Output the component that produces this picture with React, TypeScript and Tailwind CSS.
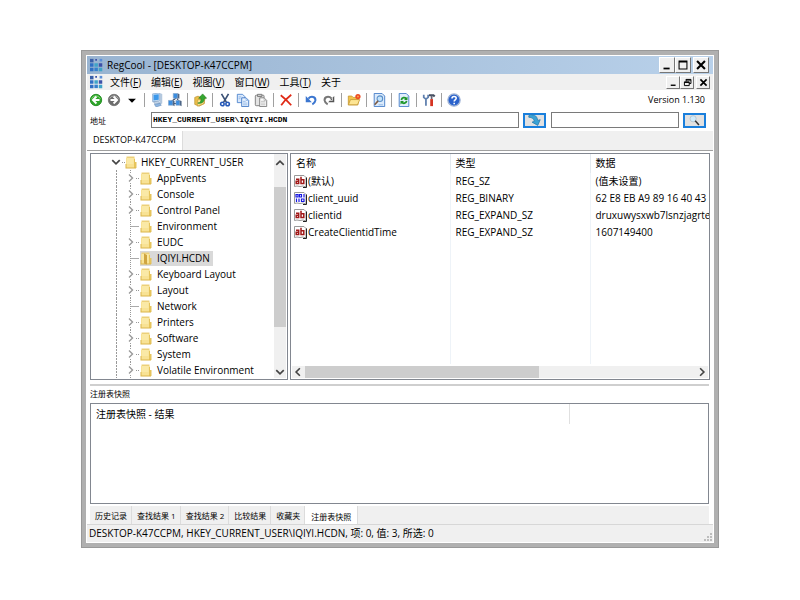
import type { ReactNode } from "react";
import clsx from "clsx";

type IconProps = { children: ReactNode; className?: string };

function Svg16({ children, className = "h-4 w-4" }: IconProps) {
  return (
    <svg viewBox="0 0 16 16" className={clsx("shrink-0", className)} fill="none" aria-hidden="true">
      {children}
    </svg>
  );
}

function LogoIcon() {
  return (
    <Svg16 className="h-[14px] w-[14px]">
      <path d="M0 1h4v4H0z" fill="#3a5fa8" />
      <path d="M0 6h4v4H0zM0 11h4v4H0z" fill="#2f6fc4" />
      <path d="M5 6h4v4H5zM10 11h4v4h-4z" fill="#3fa3c8" />
      <path d="M5 11h4v4H5z" fill="#3480cc" />
      <path d="M6 1h2v2H6zM10 6h4v4h-4z" fill="#3c50a8" />
      <path d="M11 1h3v3h-3z" fill="#5a8fd8" />
    </Svg16>
  );
}

function BackIcon() {
  return (
    <Svg16 className="h-[14px] w-[14px]">
      <circle cx="8" cy="8" r="6.500" fill="#2fa52b" stroke="#1c8a1d" />
      <path d="M3 6.500a5.500 5.500 0 0 1 10 0" stroke="#8bd97f" strokeWidth="1" />
      <path d="M8.500 4 4.500 8l4 4M5 8h7" stroke="#fff" strokeWidth="2.200" />
    </Svg16>
  );
}

function ForwardIcon() {
  return (
    <Svg16 className="h-[14px] w-[14px]">
      <circle cx="8" cy="8" r="6.500" fill="#6c6c6c" stroke="#777" />
      <path d="M3 6.500a5.500 5.500 0 0 1 10 0" stroke="#bbb" />
      <path d="m7.500 4 4 4-4 4M11 8H4" stroke="#fff" strokeWidth="2.200" />
    </Svg16>
  );
}

function DropIcon() {
  return (
    <Svg16 className="h-[14px] w-[14px]">
      <path d="M3.500 6.500h9L8 11z" fill="#000" />
    </Svg16>
  );
}

function ComputerIcon() {
  return (
    <Svg16 className="h-[14px] w-[14px]">
      <path d="m3 1 8-1v9l-8 1z" fill="#d7e6f5" stroke="#8fb0d6" />
      <path d="m4 2 6-.7v6.500l-6 .8z" fill="#3c98ea" />
      <path d="m11 0 3 1v11l-3 1z" fill="#b4c8de" />
      <path d="m4 10 5-.5 3 2.500-6 1z" fill="#c3d4e6" stroke="#7d9bbd" strokeWidth=".6" />
      <path d="m5 13 6-1 2 2-6 2z" fill="#8fb7e2" stroke="#5c85b5" strokeWidth=".6" />
    </Svg16>
  );
}

function NetworkIcon() {
  return (
    <Svg16 className="h-[14px] w-[14px]">
      <path d="M9 6 4 9.500M10 6l3 4M5 12h6" stroke="#3a4a66" strokeWidth="1.300" />
      <path d="M6 .5h5v5.500H6z" fill="#3b8ee0" stroke="#8ba6c6" strokeWidth=".7" />
      <path d="m11 .5 2 .5v5.500l-2-.5z" fill="#4d6686" />
      <path d="M.5 8.500h5V14h-5z" fill="#3b8ee0" stroke="#8ba6c6" strokeWidth=".7" />
      <path d="m5.500 8.500 2 .5v6l-2-1z" fill="#4d6686" />
      <path d="M9 8.500h4.500V14H9z" fill="#3b8ee0" stroke="#8ba6c6" strokeWidth=".7" />
      <path d="m13.500 8.500 2 .5v6l-2-1z" fill="#4d6686" />
    </Svg16>
  );
}

function FolderUpIcon() {
  return (
    <Svg16 className="h-[14px] w-[14px]">
      <path d="m2 5 4-1.500 1 1 6-1V12l-6 3-5-2z" fill="#ecc04a" stroke="#b98f30" strokeWidth=".8" />
      <path d="m5 8 9-2-2 6.500L5 15z" fill="#fbe38e" stroke="#c79b37" strokeWidth=".8" />
      <path d="M5.500 11.500c3 0 4-2 3.500-5.500H6.500L11 1l4.500 5H13c0 4-2.500 6.500-7.500 5.500z" fill="#35a832" stroke="#1e7c20" strokeWidth=".7" />
    </Svg16>
  );
}

function CutIcon() {
  return (
    <Svg16 className="h-[14px] w-[14px]">
      <path d="m4 1 5.500 9.500M12 1 6.500 10.500" stroke="#3c5276" strokeWidth="1.900" />
      <circle cx="5" cy="12.500" r="2" stroke="#2458b8" strokeWidth="1.800" />
      <circle cx="11" cy="12.500" r="2" stroke="#2458b8" strokeWidth="1.800" />
    </Svg16>
  );
}

function CopyIcon() {
  return (
    <Svg16 className="h-[14px] w-[14px]">
      <path d="M1.500 1.500h6l2.500 2.500v7H1.500z" fill="#dbe9fb" stroke="#4a82cd" />
      <path d="M6.500 5.500h5l3 3v7h-8z" fill="#eaf3fe" stroke="#3b74c2" />
      <path d="M11.500 5.500v3h3M8 9.500h3M8 11.500h5M8 13.500h5M3 4.500h3M3 6.500h2" stroke="#7aa8e2" strokeWidth=".8" />
    </Svg16>
  );
}

function PasteIcon() {
  return (
    <Svg16 className="h-[14px] w-[14px]">
      <rect x="1.500" y="2.500" width="10" height="12" rx="1" fill="#e4e4e4" stroke="#777" />
      <path d="M4 1.500h5v2.500H4z" fill="#ccc" stroke="#777" />
      <path d="M6.500 5.500h5l3 3v7h-8z" fill="#fafafa" stroke="#777" />
      <path d="M8 9.500h5M8 11.500h5M8 13.500h5M11.500 5.500v3h3" stroke="#aaa" strokeWidth=".8" />
    </Svg16>
  );
}

function DeleteIcon() {
  return (
    <Svg16 className="h-[14px] w-[14px]">
      <path d="M2 2.500c4 3 8 7 12 11.500M14 2C9.500 5.500 5.500 9.500 2.500 14" stroke="#e02a16" strokeWidth="2" />
    </Svg16>
  );
}

function UndoIcon() {
  return (
    <Svg16 className="h-[14px] w-[14px]">
      <path d="M5 6.500C8 3 13.500 4 13 8.500c-.3 2-1.500 3.500-3.500 4.500" stroke="#3b76d0" strokeWidth="2.400" />
      <path d="M2 3.500v7h7z" fill="#3b76d0" />
    </Svg16>
  );
}

function RedoIcon() {
  return (
    <Svg16 className="h-[14px] w-[14px]">
      <path d="M11 6.500C8 3 2.500 4 3 8.500c.3 2 1.500 3.500 3.500 4.500" stroke="#777" strokeWidth="2.400" />
      <path d="M14 3.500v7H7z" fill="#555" />
      <path d="M9 8.500h3v-3" stroke="#ddd" />
    </Svg16>
  );
}

function NewKeyIcon() {
  return (
    <Svg16 className="h-[14px] w-[14px]">
      <path d="M1.500 13.500V3.500h4l1.500 1.500h5.500v8.500z" fill="#f2c54b" stroke="#c99c3a" />
      <path d="m1.500 13.500 2.500-6h10.500l-2.500 6z" fill="#fde594" stroke="#c79b37" />
      <circle cx="12.500" cy="4" r="3" fill="#ee4b23" />
      <circle cx="12.500" cy="4" r="1.200" fill="#f9a04c" />
    </Svg16>
  );
}

function FindIcon() {
  return (
    <Svg16 className="h-[14px] w-[14px]">
      <path d="M2.500.5h9l3 3v12h-12z" fill="#dcebfb" stroke="#3e78c6" />
      <circle cx="9" cy="6.500" r="3.200" fill="#c5e4fb" stroke="#5a8fc8" strokeWidth="1.200" />
      <path d="m7 9-4 4.500" stroke="#7e5b43" strokeWidth="1.800" />
      <path d="M7.500 13.500h5" stroke="#8ab2e2" />
    </Svg16>
  );
}

function RefreshIcon() {
  return (
    <Svg16 className="h-[14px] w-[14px]">
      <path d="M2.500.5h8l3 3v12h-11z" fill="#e1eefc" stroke="#3e78c6" />
      <path d="M5 8c.5-3 4-3.500 5.500-1.500M11 9c-.5 3-4 3.500-5.500 1.500" stroke="#1e962a" strokeWidth="2" />
      <path d="M12 4v4H8zM4 13V9h4z" fill="#1e962a" />
    </Svg16>
  );
}

function ToolsIcon() {
  return (
    <Svg16 className="h-[14px] w-[14px]">
      <path d="M2 2v3l2.500 2L7 5V2M4.500 6.500v8" stroke="#5e7fae" strokeWidth="2" />
      <path d="M8 2.500h5l1.500 1.500" stroke="#444e60" strokeWidth="2.400" />
      <path d="M11 3v4" stroke="#667" strokeWidth="2" />
      <path d="M11 7v8" stroke="#d53322" strokeWidth="3.200" />
    </Svg16>
  );
}

function HelpIcon() {
  return (
    <Svg16 className="h-[14px] w-[14px]">
      <circle cx="8" cy="8" r="7" fill="#2a62cc" stroke="#9fb3d6" strokeWidth="1.500" />
      <path d="M5.700 6.200c0-3 4.800-3 4.800-.2 0 1.800-2.300 1.700-2.300 3.600M8.200 11v1.800" stroke="#fff" strokeWidth="1.800" />
    </Svg16>
  );
}

function FolderIcon({ open = false }: { open?: boolean }) {
  return (
    <svg viewBox="0 0 12 13" className="h-[13px] w-3 shrink-0" aria-hidden="true">
      <path d="M1.500.5h8v9h-8z" fill="#ecd07a" />
      <path d="M1 2h8.500v10H1z" fill="#f8e294" />
      <path d="M2 2h6.500v6H2z" fill="#fae9a6" />
      <path d="M9 3h1v3h1.500v6H9z" fill="#e6c45c" />
      <path d="M.5 8h1v4.500h-1zM1 11.500h10v1H1z" fill="#dcb64a" />
      {open && <path d="m4 1.500 3 1.500v9.500l-3-1z" fill="#cfa540" />}
    </svg>
  );
}

function ValueIcon({ binary }: { binary: boolean }) {
  return (
    <svg viewBox="0 0 13 13" className="h-[13px] w-[13px] shrink-0" aria-hidden="true">
      <path d="M.5.5h9.500l2 2v9.500l-3-1-3 .5-3-.5-2.500.5z" fill="#fff" stroke="#999" />
      <path d="M12.500 2.500v10H9" fill="none" stroke="#222" />
      {binary ? (
        <g fill="none" stroke="#1616e0" strokeWidth="1.200">
          <path d="M2 2.500h2v2.500H2zM5.500 2.500h2v2.500h-2zM10 2v3.500" />
          <path d="M2.500 6.500V10M5 6.500V10M7.500 7H10v2.500H7.500z" />
        </g>
      ) : (
        <g fill="none" stroke="#a01818" strokeWidth="1.500">
          <path d="M2 4.200h2.700V8.500H2.200V6.300h2.500M7 1.800v6.700h2.800V4.800H7" />
        </g>
      )}
    </svg>
  );
}

const titleGlyphs = {
  minimize: <path d="M4 12h7" stroke="#000" strokeWidth="2" />,
  maximize: <path d="M3 3.500h10M3.500 3v9.500h9V3M3 4.500h10" stroke="#000" strokeWidth="1.200" />,
  restore: <path d="M6 3.500h7v6h-2.500M6 3v3.500M6 4.500h7M3.500 7h7v5.500h-7zM3.500 8h7" stroke="#000" strokeWidth="1.400" />,
  close: <path d="m3.500 3.500 9 9M12.500 3.500l-9 9" stroke="#000" strokeWidth="2.400" />,
};

type FrameButtonProps = { kind: keyof typeof titleGlyphs; small?: boolean };

function FrameButton({ kind, small = false }: FrameButtonProps) {
  return (
    <button
      type="button"
      aria-label={kind}
      className={clsx(
        "flex items-center justify-center border border-t-white border-l-white border-r-[#777] border-b-[#777] bg-[#f0f0f0]",
        small ? "h-[13px] w-[14px]" : "h-4 w-4",
      )}
    >
      <Svg16 className={small ? "h-[11px] w-[11px]" : "h-[14px] w-[14px]"}>{titleGlyphs[kind]}</Svg16>
    </button>
  );
}

const menus = [
  { label: "文件", hotkey: "F" },
  { label: "编辑", hotkey: "E" },
  { label: "视图", hotkey: "V" },
  { label: "窗口", hotkey: "W" },
  { label: "工具", hotkey: "T" },
  { label: "关于" },
];

const toolGroups = [
  [
    { label: "Back", icon: <BackIcon /> },
    { label: "Forward", icon: <ForwardIcon /> },
    { label: "History", icon: <DropIcon /> },
  ],
  [
    { label: "Local registry", icon: <ComputerIcon /> },
    { label: "Network registry", icon: <NetworkIcon /> },
  ],
  [{ label: "Up", icon: <FolderUpIcon /> }],
  [
    { label: "Cut", icon: <CutIcon /> },
    { label: "Copy", icon: <CopyIcon /> },
    { label: "Paste", icon: <PasteIcon /> },
  ],
  [{ label: "Delete", icon: <DeleteIcon /> }],
  [
    { label: "Undo", icon: <UndoIcon /> },
    { label: "Redo", icon: <RedoIcon /> },
  ],
  [{ label: "New key", icon: <NewKeyIcon /> }],
  [{ label: "Find", icon: <FindIcon /> }],
  [{ label: "Refresh", icon: <RefreshIcon /> }],
  [{ label: "Options", icon: <ToolsIcon /> }],
  [{ label: "Help", icon: <HelpIcon /> }],
];

const treeKeys = [
  { name: "AppEvents", expandable: true },
  { name: "Console", expandable: true },
  { name: "Control Panel", expandable: true },
  { name: "Environment", expandable: false },
  { name: "EUDC", expandable: true },
  { name: "IQIYI.HCDN", expandable: false, selected: true },
  { name: "Keyboard Layout", expandable: true },
  { name: "Layout", expandable: true },
  { name: "Network", expandable: false },
  { name: "Printers", expandable: true },
  { name: "Software", expandable: true },
  { name: "System", expandable: true },
  { name: "Volatile Environment", expandable: true },
];

const values = [
  { name: "(默认)", type: "REG_SZ", data: "(值未设置)" },
  { name: "client_uuid", type: "REG_BINARY", data: "62 E8 EB A9 89 16 40 43" },
  { name: "clientid", type: "REG_EXPAND_SZ", data: "druxuwysxwb7lsnzjagrtec" },
  { name: "CreateClientidTime", type: "REG_EXPAND_SZ", data: "1607149400" },
];

const resultTabs = ["历史记录", "查找结果 1", "查找结果 2", "比较结果", "收藏夹", "注册表快照"];

function TitleBar() {
  return (
    <header className="flex h-[18px] items-center bg-linear-to-r from-[#99b4d1] to-[#b9d1ea] pr-1 pl-[3px]">
      <LogoIcon />
      <h1 className="ml-[3px] flex-1">RegCool - [DESKTOP-K47CCPM]</h1>
      <FrameButton kind="minimize" />
      <FrameButton kind="maximize" />
      <div className="w-0.5" />
      <FrameButton kind="close" />
    </header>
  );
}

function MenuBar() {
  return (
    <nav className="flex h-4 items-center bg-[#f0f0f0] pr-[3px] pl-[3px]">
      <LogoIcon />
      <div className="ml-px flex flex-1">
        {menus.map((menu) => (
          <button key={menu.label} type="button" className="px-[5px]">
            {menu.label}
            {menu.hotkey && (
              <>
                (<span className="underline">{menu.hotkey}</span>)
              </>
            )}
          </button>
        ))}
      </div>
      <FrameButton kind="minimize" small />
      <FrameButton kind="restore" small />
      <div className="w-0.5" />
      <FrameButton kind="close" small />
    </nav>
  );
}

function Toolbar() {
  return (
    <div className="flex h-[19px] items-center bg-white pr-2">
      {toolGroups.map((group, i) => (
        <div key={group[0].label} className="flex items-center">
          {i > 0 && (
            <div className="flex w-[7px] justify-center">
              <div className="h-[14px] w-px bg-[#a0a0a0]" />
            </div>
          )}
          {group.map((tool) => (
            <button key={tool.label} type="button" aria-label={tool.label} className="flex w-[18px] justify-center">
              {tool.icon}
            </button>
          ))}
        </div>
      ))}
      <span className="ml-auto text-[9px]">Version 1.130</span>
    </div>
  );
}

function AddressRow() {
  const action = "flex h-[15px] w-[23px] items-center justify-center border-2 border-[#1a7fdc] bg-[#e1e1e1]";
  return (
    <div className="flex h-[22px] items-center bg-white pr-[7px] pl-[3px]">
      <label htmlFor="address" className="w-[61px] shrink-0 text-[8px]">
        地址
      </label>
      <input
        id="address"
        defaultValue="HKEY_CURRENT_USER\IQIYI.HCDN"
        className="h-4 min-w-0 flex-1 border border-[#7a7a7a] bg-white pb-0.5 pl-px font-['Liberation_Mono',monospace] text-[8px] leading-3 font-bold"
      />
      <button type="button" aria-label="Go" className={clsx(action, "ml-1")}>
        <Svg16 className="h-[13px] w-[15px]">
          <path d="M1 2c5-2 10-1 11 6l3-1-3 7-7-4 3-1C7 6 5 4 1 4z" fill="#3aa3d6" stroke="#2b7fb0" />
        </Svg16>
      </button>
      <input
        aria-label="Search"
        className="ml-[5px] h-4 w-32 border border-[#7a7a7a] bg-white px-0.5"
      />
      <button type="button" aria-label="Search" className={clsx(action, "ml-1")}>
        <Svg16 className="h-[11px] w-[13px]">
          <circle cx="6" cy="5.500" r="4.500" fill="#cfeafa" stroke="#a9b8c2" />
          <path d="m9 8.500 5.500 6" stroke="#333" strokeWidth="2.200" />
        </Svg16>
      </button>
    </div>
  );
}

type BranchProps = { expandable: boolean };

function Branch({ expandable }: BranchProps) {
  return (
    <svg viewBox="0 0 24 16" className="h-4 w-6 shrink-0" fill="none" aria-hidden="true">
      <path d="M.5 0v16" stroke="#999" strokeDasharray="2 1" />
      {expandable ? (
        <>
          <path d="M14.500 0v3M14.500 13v3M20 8.500h3" stroke="#999" strokeDasharray="1 1" />
          <path d="m13 4.500 3.500 3.500-3.500 3.500" stroke="#999" strokeWidth="1.400" />
        </>
      ) : (
        <>
          <path d="M14.500 0v16" stroke="#999" strokeDasharray="1 1" />
          <path d="M15 8.500h8" stroke="#aaa" />
        </>
      )}
    </svg>
  );
}

function Chevron({ d }: { d: string }) {
  return (
    <Svg16 className="h-3 w-3">
      <path d={d} stroke="#444" strokeWidth="2.200" />
    </Svg16>
  );
}

function TreePanel() {
  return (
    <section className="flex w-[198px] shrink-0 border border-[#828790] bg-white pr-px pb-px" aria-label="Keys">
      <ul className="min-w-0 flex-1">
        <li className="flex h-4 items-center pl-[19px]">
          <Chevron d="m3 5.500 5 5 5-5" />
          <div className="w-[3px] border-t border-dotted border-[#999]" />
          <FolderIcon />
          <span className="pl-1">HKEY_CURRENT_USER</span>
        </li>
        {treeKeys.map((key) => (
          <li key={key.name} className="flex h-4 items-center pl-[25px]">
            <Branch expandable={key.expandable} />
            <div
              className={clsx(
                "flex h-[15px] items-center pr-[3px] whitespace-nowrap",
                key.selected && "bg-[#d9d9d9]",
              )}
            >
              <FolderIcon open={key.selected} />
              <span className="pl-[5px]">{key.name}</span>
            </div>
          </li>
        ))}
      </ul>
      <div className="flex w-3 flex-col items-center justify-between bg-[#f0f0f0] pt-[3px]">
        <Chevron d="m3 10.500 5-5 5 5" />
        <div className="mt-[18px] w-full flex-1 bg-[#cdcdcd]" />
        <div className="h-[39px]" />
        <Chevron d="m3 5.500 5 5 5-5" />
      </div>
    </section>
  );
}

function ValuePanel() {
  return (
    <section className="flex min-w-0 flex-1 flex-col border border-[#828790] bg-white" aria-label="Values">
      <div className="flex-1 overflow-hidden">
        <table className="w-full table-fixed border-collapse text-left">
          <colgroup>
            <col className="w-[159px]" />
            <col className="w-[140px]" />
            <col />
          </colgroup>
          <thead>
            <tr className="h-[19px]">
              <th className="border-r border-[#e3e9ef] pl-[5px] font-normal">名称</th>
              <th className="border-r border-[#e3e9ef] pl-[5px] font-normal">类型</th>
              <th className="pl-[5px] font-normal">数据</th>
            </tr>
          </thead>
          <tbody>
            {values.map((value) => (
              <tr key={value.name} className="h-[17px]">
                <td className="border-r border-[#eef3f8] pl-[3px]">
                  <div className="flex items-center gap-px">
                    <ValueIcon binary={value.type === "REG_BINARY"} />
                    {value.name}
                  </div>
                </td>
                <td className="border-r border-[#eef3f8] pl-[5px]">{value.type}</td>
                <td className="overflow-hidden pl-[5px] whitespace-nowrap">{value.data}</td>
              </tr>
            ))}
            <tr className="h-[123px]">
              <td className="border-r border-[#eef3f8]" />
              <td className="border-r border-[#eef3f8]" />
              <td />
            </tr>
          </tbody>
        </table>
      </div>
      <div className="mx-px mb-px flex h-3 items-center gap-px bg-[#f0f0f0]">
        <Chevron d="m10.500 3-5 5 5 5" />
        <div className="flex h-full flex-1">
          <div className="h-full w-3/5 bg-[#cdcdcd]" />
        </div>
        <Chevron d="m5.500 3 5 5-5 5" />
      </div>
    </section>
  );
}

function ResultPanel() {
  return (
    <section className="bg-white pt-1 pr-1 pl-[3px]">
      <div className="border-t-2 border-[#cfcfcf] bg-white">
        <h2 className="h-[17px] text-[8px] leading-[15px]">注册表快照</h2>
        <div className="h-[101px] border border-[#828790] bg-white">
          <div className="flex h-5">
            <div className="flex flex-1 items-center border-r border-[#e0e0e0] pl-[5px]">注册表快照 - 结果</div>
            <div className="w-[138px]" />
          </div>
        </div>
      </div>
      <div className="mt-0.5 flex h-[18px] bg-[#f0f0f0] text-[8px]" role="tablist">
        {resultTabs.map((tab, i) => {
          const active = i === resultTabs.length - 1;
          return (
            <button
              key={tab}
              type="button"
              role="tab"
              aria-selected={active}
              className={clsx(
                "border-r border-[#dcdcdc]",
                active ? "bg-white px-1.5 pt-0.5" : "bg-[#f0f0f0] pr-1 pl-[5px]",
              )}
            >
              {tab}
            </button>
          );
        })}
      </div>
    </section>
  );
}

function StatusBar() {
  return (
    <footer className="flex h-[18px] items-center border-t border-[#d7d7d7] pl-0.5">
      <span className="flex-1">DESKTOP-K47CCPM, HKEY_CURRENT_USER\IQIYI.HCDN, 项: 0, 值: 3, 所选: 0</span>
      <svg viewBox="0 0 9 9" className="h-[9px] w-[9px] self-end" aria-hidden="true">
        <path d="M6 0h2v2H6zM3 3h2v2H3zM6 3h2v2H6zM0 6h2v2H0zM3 6h2v2H3zM6 6h2v2H6z" fill="#bdbdbd" />
      </svg>
    </footer>
  );
}

export default function App() {
  return (
    <main className="bg-white px-[81px] py-[50px] font-['Open_Sans','Noto_Sans_CJK_SC',sans-serif] text-[10px] leading-[15px] text-black">
      <div className="border-5 border-[#b0b0b0] outline-1 -outline-offset-1 outline-[#999]">
        <div className="border border-white bg-[#f0f0f0]">
          <TitleBar />
          <MenuBar />
          <Toolbar />
          <AddressRow />
          <div className="flex h-[19px] items-end" role="tablist">
            <button type="button" role="tab" aria-selected="true" className="h-[19px] border-r border-[#dcdcdc] bg-white px-1.5 pb-0.5 text-[9px]">
              DESKTOP-K47CCPM
            </button>
          </div>
          <div className="flex gap-0.5 border-t border-[#a0a0a0] bg-white pt-0.5 pr-[3px] pl-[3px]">
            <TreePanel />
            <ValuePanel />
          </div>
          <ResultPanel />
          <StatusBar />
        </div>
      </div>
    </main>
  );
}
